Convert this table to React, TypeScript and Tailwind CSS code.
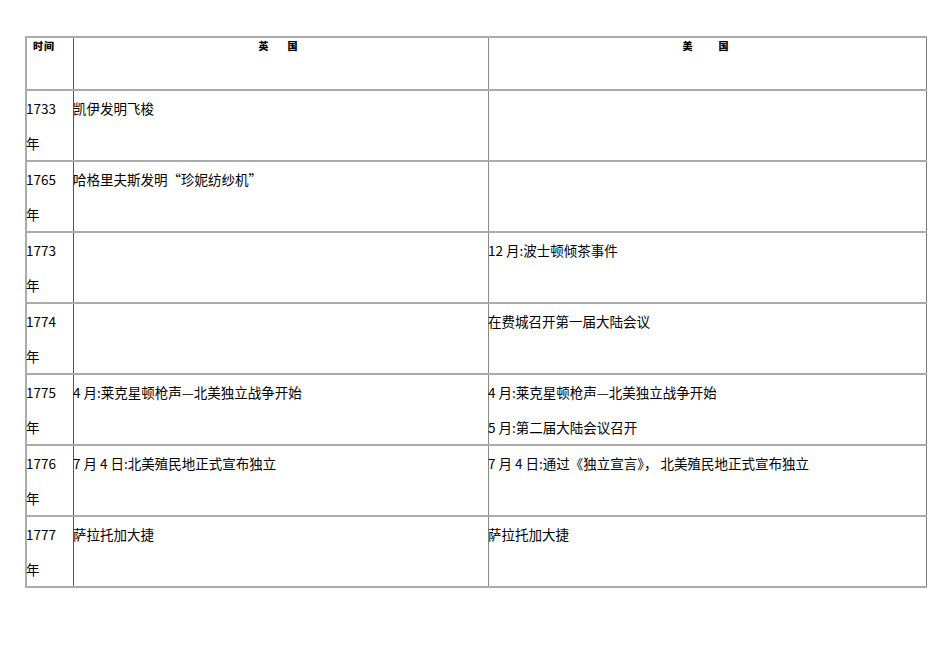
import React from "react";

type Row = { year: string; uk: string[]; us: string[] };

const rows: Row[] = [
  { year: "1733", uk: ["凯伊发明飞梭"], us: [] },
  { year: "1765", uk: ["哈格里夫斯发明“珍妮纺纱机”"], us: [] },
  { year: "1773", uk: [], us: ["12 月:波士顿倾茶事件"] },
  { year: "1774", uk: [], us: ["在费城召开第一届大陆会议"] },
  {
    year: "1775",
    uk: ["4 月:莱克星顿枪声—北美独立战争开始"],
    us: ["4 月:莱克星顿枪声—北美独立战争开始", "5 月:第二届大陆会议召开"],
  },
  {
    year: "1776",
    uk: ["7 月 4 日:北美殖民地正式宣布独立"],
    us: ["7 月 4 日:通过《独立宣言》， 北美殖民地正式宣布独立"],
  },
  { year: "1777", uk: ["萨拉托加大捷"], us: ["萨拉托加大捷"] },
];

export default function App() {
  return (
    <div
      className="w-[950px] h-[672px] bg-white text-black pt-[36px] pl-[25px]"
      style={{ fontFamily: '"Noto Sans CJK SC", "Noto Sans", sans-serif' }}
    >
      <div className="w-[902px] border-t-2 border-l-2 border-[#ababab]">
        <div className="flex h-[53px] border-b-2 border-[#ababab]">
          <div className="w-[47px] shrink-0 border-r border-[#555] text-[10px] font-black leading-[14px] pt-[1px] pl-[6px] tracking-[1px]">
            时间
          </div>
          <div className="w-[415px] shrink-0 border-r border-[#888] text-[10px] font-black leading-[14px] pt-[1px] text-center pr-[6px]">
            英<span className="inline-block w-[19px]"></span>国
          </div>
          <div className="flex-1 border-r border-[#777] text-[10px] font-black leading-[14px] pt-[1px] text-center pr-[4px]">
            美<span className="inline-block w-[26px]"></span>国
          </div>
        </div>
        {rows.map((r) => (
          <div key={r.year} className="flex h-[71px] border-b-2 border-[#ababab] text-[13.5px] leading-[35px]">
            <div className="w-[47px] shrink-0 border-r border-[#555]">
              <div className="-ml-[1px]">{r.year}</div>
              <div className="-ml-[1px]">年</div>
            </div>
            <div className="w-[415px] shrink-0 border-r border-[#888]">
              {r.uk.map((t, i) => (
                <div key={i} className="whitespace-pre -ml-[1px]">{t}</div>
              ))}
            </div>
            <div className="flex-1 border-r border-[#777]">
              {r.us.map((t, i) => (
                <div key={i} className="whitespace-pre -ml-[1px]">{t}</div>
              ))}
            </div>
          </div>
        ))}
      </div>
    </div>
  );
}
